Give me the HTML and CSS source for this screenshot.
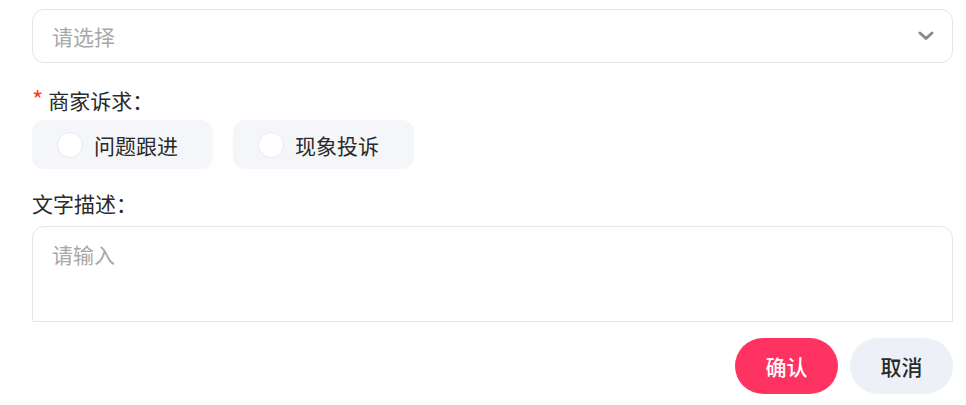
FILE: index.html
```html
<!DOCTYPE html>
<html lang="zh-CN">
<head>
    <meta charset="UTF-8">
    <meta name="viewport" content="width=device-width, initial-scale=1.0">
    <title>商家诉求</title>
    <link rel="stylesheet" href="styles.css">
</head>
<body>
    <div class="form">
        <div class="select">
            <span class="placeholder">请选择</span>
            <svg class="arrow" width="16" height="10" viewBox="0 0 16 10">
                <path d="M2 2 L8 7.5 L14 2" fill="none" stroke="#8a8a8a" stroke-width="3" stroke-linecap="round" stroke-linejoin="round"/>
            </svg>
        </div>

        <div class="label"><span class="required">*</span>商家诉求：</div>
        <div class="options">
            <div class="option"><span class="radio"></span>问题跟进</div>
            <div class="option"><span class="radio"></span>现象投诉</div>
        </div>

        <div class="label">文字描述：</div>
        <div class="textarea">
            <span class="placeholder">请输入</span>
        </div>

        <div class="actions">
            <button class="btn confirm">确认</button>
            <button class="btn cancel">取消</button>
        </div>
    </div>
</body>
</html>
```

FILE: styles.css
```css
body {
    margin: 0;
    background-color: #fff;
    font-family: "Noto Sans CJK SC", "Noto Sans", sans-serif;
    color: #2a2a2a;
}

.form {
    display: flex;
    flex-direction: column;
    padding: 9px 13px 0 32px;
}

.select {
    display: flex;
    align-items: center;
    justify-content: space-between;
    height: 54px;
    box-sizing: border-box;
    padding: 0 18px 0 19px;
    border: 1.5px solid #e4e5ef;
    border-radius: 12px;
}

.placeholder {
    font-size: 21px;
    color: #a8a8a8;
}

.label {
    margin-top: 23px;
    height: 28px;
    font-size: 21px;
    line-height: 28px;
}

.required {
    color: #ff3b1f;
    font-size: 24px;
    line-height: 1;
    margin-right: 5px;
}

.options {
    display: flex;
    gap: 20px;
    margin-top: 6px;
}

.option {
    display: flex;
    align-items: center;
    width: 181px;
    height: 49px;
    box-sizing: border-box;
    padding-left: 25px;
    background-color: #f5f6f9;
    border-radius: 12px;
    font-size: 21px;
}

.radio {
    width: 26px;
    height: 26px;
    box-sizing: border-box;
    margin-right: 11px;
    border: 1.5px solid #e8e9f2;
    border-radius: 50%;
    background-color: #fff;
}

.options + .label {
    margin-top: 20px;
}

.textarea {
    margin-top: 9px;
    height: 96px;
    box-sizing: border-box;
    padding: 12px 19px;
    border: 1.5px solid #e4e5ef;
    border-radius: 12px 12px 0 0;
}

.actions {
    display: flex;
    justify-content: flex-end;
    gap: 12px;
    margin-top: 16px;
}

.btn {
    width: 103px;
    height: 56px;
    border: none;
    border-radius: 28px;
    font-family: inherit;
    font-size: 21px;
    font-weight: 500;
}

.confirm {
    background-color: #ff3361;
    color: #fff;
}

.cancel {
    background-color: #eef0f8;
    color: #2a2a2a;
}
```
